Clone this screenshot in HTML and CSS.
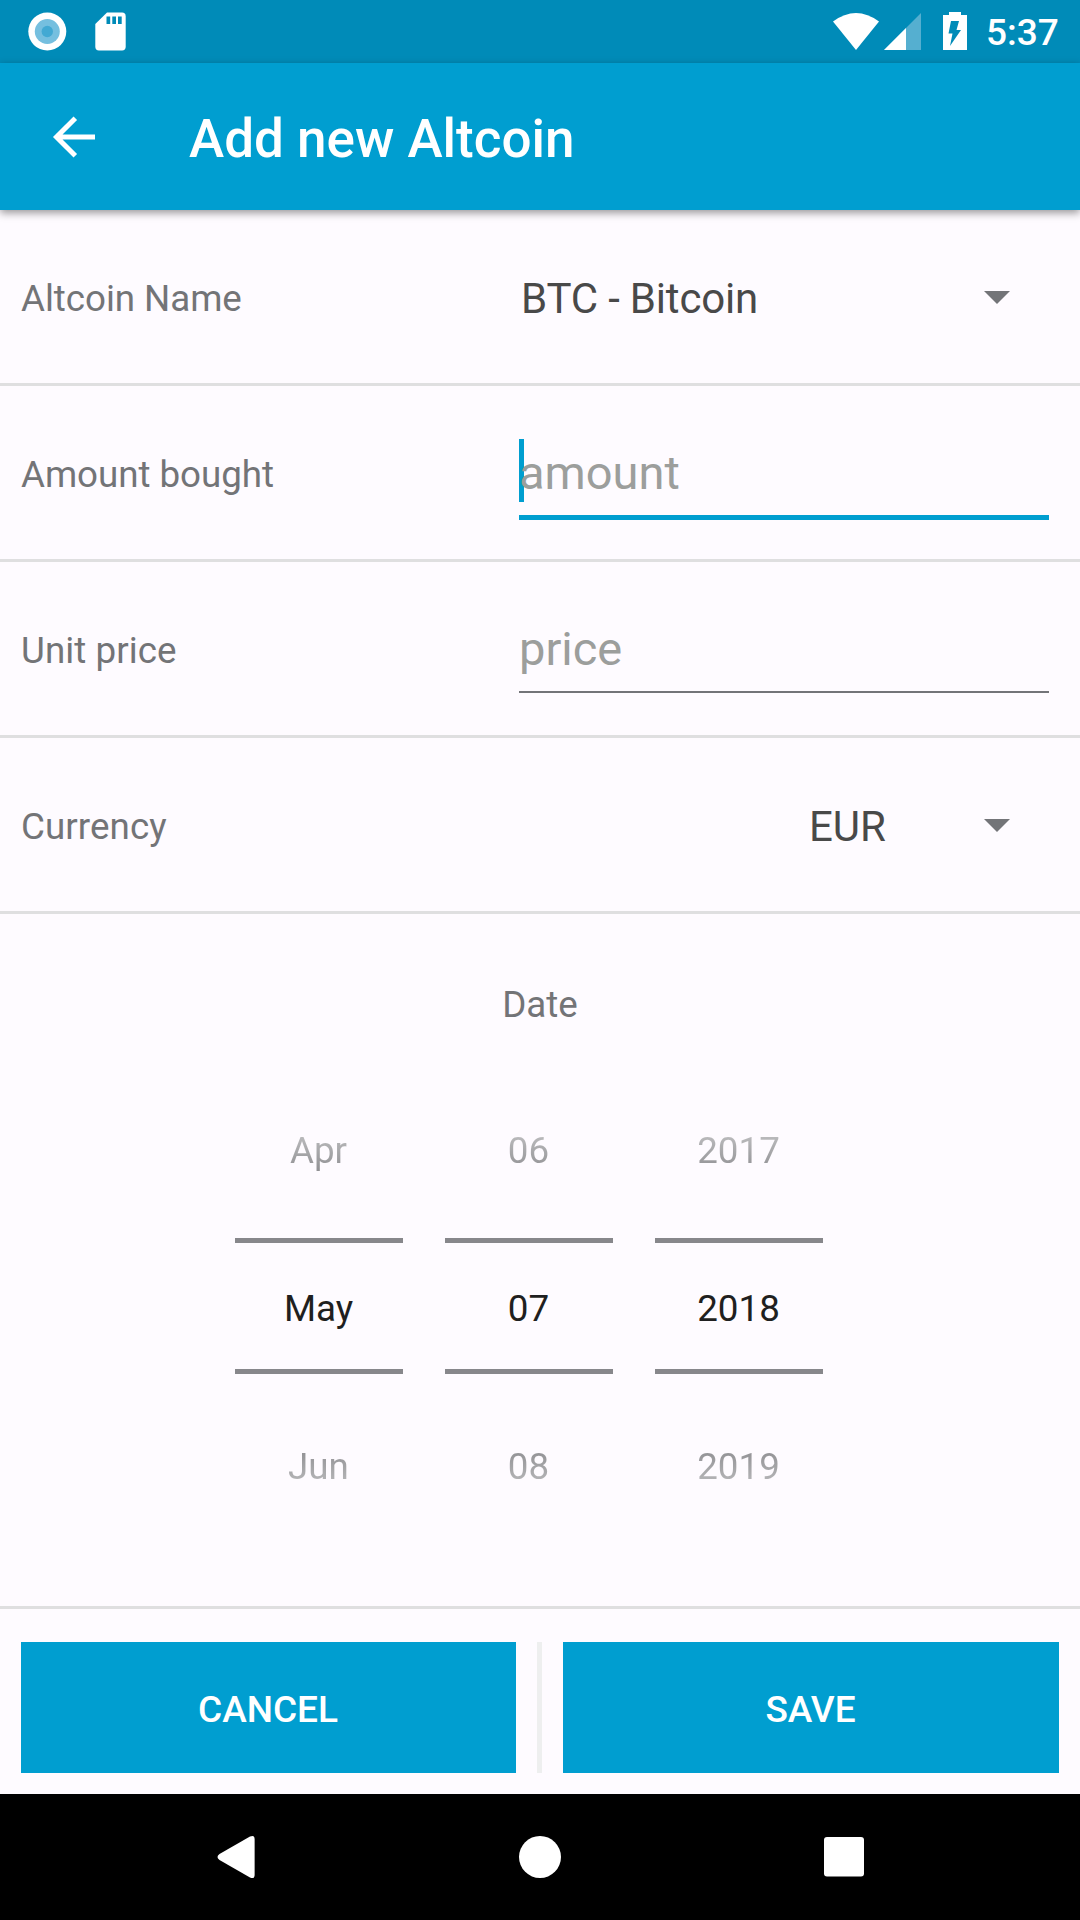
FILE: index.html
```html
<!DOCTYPE html>
<html lang="en">
<head>
<meta charset="utf-8">
<title>Add new Altcoin</title>
<link rel="stylesheet" href="styles.css">
</head>
<body>
<div class="screen">
  <header class="status">
    <svg class="status-icons" width="140" height="63" viewBox="0 0 140 63">
      <circle cx="47.3" cy="31.5" r="19" fill="#fff"/><circle cx="47.3" cy="31.5" r="12.5" fill="#75bfdf"/><circle cx="47.3" cy="31.5" r="5.7" fill="#42a9d3"/>
      <path fill="#fff" d="M107 12.5h15q3.700 0 3.700 3.700v30.600q0 3.700-3.700 3.700H99q-3.700 0-3.700-3.700V24z"/>
      <path fill="#008bb8" d="M106.500 16.500h3.700v7.500h-3.700zM112.300 16.500h3.700v7.500h-3.700zM118 16.500h3.700v7.500h-3.700z"/>
    </svg>
    <svg class="status-icons" width="150" height="63" viewBox="830 0 150 63">
      <path fill="#fff" d="M833 21.500Q856 4.500 879 21.500L856 50z"/>
      <path fill="#55afd0" d="M921 13V50H884z"/><path fill="#fff" d="M906 28V50H884z"/>
      <path fill="#fff" d="M949 12h12v3h6v35h-24V15h6z"/>
      <path fill="#008bb8" d="M951 21h8l-2.500 9h4.500L950 46l2.500-12.500h-4z"/>
    </svg>
    <span class="clock">5:37</span>
  </header>
  <div class="toolbar">
    <svg class="back" width="48" height="48" viewBox="0 0 48 48"><path d="M45 24H7M25.300 5.200L6.500 24l18.800 18.800" fill="none" stroke="#fff" stroke-width="5"/></svg>
    <h1 class="title">Add new Altcoin</h1>
  </div>
  <main class="form">
    <div class="row"><label class="label">Altcoin Name</label><div class="select"><span>BTC - Bitcoin</span><i class="caret"></i></div></div>
    <div class="row"><label class="label">Amount bought</label><div class="field focused"><span>amount</span></div></div>
    <div class="row"><label class="label wide">Unit price</label><div class="field"><span>price</span></div></div>
    <div class="row"><label class="label wide">Currency</label><div class="select currency"><span>EUR</span><i class="caret"></i></div></div>
    <section class="date">
      <div class="date-title">Date</div>
      <div class="pickers">
        <div class="picker"><span class="other">Apr</span><span class="current">May</span><span class="other next">Jun</span></div>
        <div class="picker"><span class="other">06</span><span class="current">07</span><span class="other next">08</span></div>
        <div class="picker"><span class="other">2017</span><span class="current">2018</span><span class="other next">2019</span></div>
      </div>
    </section>
    <div class="actions"><button class="button">CANCEL</button><i class="divider"></i><button class="button save">SAVE</button></div>
  </main>
  <nav class="nav">
    <svg width="1080" height="126" viewBox="0 0 1080 126" fill="#fff">
      <path d="M250 42.500q4.600-2 4.600 2.500v36q0 4.500-4.600 2.500l-30.500-17.500q-4-3 0-6z"/><circle cx="540" cy="63" r="21"/><rect x="824" y="43" width="40" height="39.500" rx="3"/>
    </svg>
  </nav>
</div>
</body>
</html>
```
FILE: styles.css
```css
* { box-sizing: border-box; }
body { margin: 0; font-family: Roboto, sans-serif; }
.screen { width: 1080px; height: 1920px; display: flex; flex-direction: column; background: #fefbff; overflow: hidden; }
.status { height: 63px; background: #008bb8; display: flex; color: #fff; }
.status-icons { display: block; }
.status-icons + .status-icons { margin-left: 690px; }
.clock { margin-left: 6px; font-size: 37px; font-weight: 500; line-height: 66px; }
.toolbar { height: 147px; background: #009ed0; display: flex; align-items: center; padding-left: 50px; box-shadow: 0 3px 8px rgba(0,0,0,.4); z-index: 1; }
.title { margin: 4px 0 0 91px; font-size: 53px; font-weight: 500; color: #fff; }
.form { flex: 1; display: flex; flex-direction: column; }
.row { height: 176px; border-bottom: 3px solid #dfdfe0; display: flex; align-items: center; padding: 2px 31px 0 21px; }
.label { width: 498px; padding-top: 2px; font-size: 36.75px; letter-spacing: -.05px; color: #737477; }
.wide { letter-spacing: .07px; }
.select { flex: 1; display: flex; align-items: center; justify-content: space-between; padding: 0 39.5px 0 2px; font-size: 42px; letter-spacing: -.18px; color: #494949; }
.select span { padding-top: 2px; }
.currency { padding-left: 290px; letter-spacing: 0; }
.caret { width: 0; height: 0; border: 13px solid transparent; border-top-color: #737478; border-bottom: 0; }
.field { flex: 1; align-self: flex-start; margin-top: 47px; height: 82px; border-bottom: 2px solid #737478; font-size: 47px; line-height: 76px; color: #9c9e9c; }
.focused { height: 85px; border-bottom: 5px solid #009ed0; position: relative; }
.focused span { position: relative; }
.focused::before { content: ""; position: absolute; left: 0; top: 4px; width: 5px; height: 63px; background: #009ed0; }
.date { height: 695px; border-bottom: 3px solid #dfdfe0; font-size: 36.75px; }
.date-title { padding-top: 69px; line-height: 44px; text-align: center; color: #737477; }
.pickers { display: flex; gap: 42px; padding: 74px 0 0 235px; }
.picker { width: 168px; display: flex; flex-direction: column; text-align: center; }
.other { height: 137px; padding-right: 1px; line-height: 100px; color: transparent; background: linear-gradient(#bbbbbd 34px, #8e8e91 72px); -webkit-background-clip: text; background-clip: text; }
.current { height: 136px; padding-right: 1px; border: solid #87878b; border-width: 5px 0; line-height: 131px; color: #1f1f20; }
.next { padding-top: 43px; background-image: linear-gradient(#929295 77px, #bbbbbd 113px); }
.actions { flex: 1; display: flex; gap: 21px; padding: 33px 21px 21px; }
.button { width: 495px; border: 0; padding: 4px 1px 0 0; background: #009ed0; color: #fff; font: 500 37px Roboto, sans-serif; }
.save { width: 496px; }
.divider { width: 5px; background: #eeefef; }
.nav { height: 126px; background: #000; }
.nav svg { display: block; }
```
